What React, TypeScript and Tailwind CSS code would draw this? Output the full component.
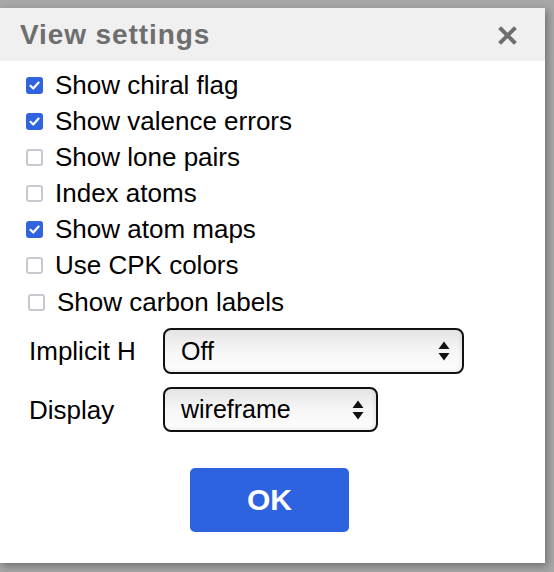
import React from "react";

const font = { fontFamily: '"Liberation Sans", Arial, sans-serif' };

function Check({ checked }: { checked: boolean }) {
  if (checked) {
    return (
      <span className="flex h-[17px] w-[17px] shrink-0 items-center justify-center rounded-[3px] bg-[#2f64de]">
        <svg width="13" height="13" viewBox="0 0 13 13">
          <path d="M2.5 6.8 L5.3 9.5 L10.6 3.6" fill="none" stroke="#fff" strokeWidth="2.2" strokeLinecap="round" strokeLinejoin="round" />
        </svg>
      </span>
    );
  }
  return <span className="block h-[17px] w-[17px] shrink-0 rounded-[3px] border-2 border-[#c6cad0] bg-white" />;
}

function Row({ label, checked, extra = "" }: { label: string; checked: boolean; extra?: string }) {
  return (
    <div className={`flex h-[36px] items-center gap-[12px] ${extra}`}>
      <Check checked={checked} />
      <span className="text-[26px] leading-none text-black">{label}</span>
    </div>
  );
}

function Arrows() {
  return (
    <svg width="14" height="22" viewBox="0 0 14 22" className="shrink-0">
      <path d="M7 1.5 L12.5 9 L1.5 9 Z" fill="#111" />
      <path d="M7 20.5 L12.5 13 L1.5 13 Z" fill="#111" />
    </svg>
  );
}

function Select({ value, width, height }: { value: string; width: string; height: string }) {
  return (
    <div
      className={`flex ${width} ${height} items-center justify-between rounded-[8px] border-2 border-[#111] bg-gradient-to-b from-[#e4e4e4] via-[#f6f6f6] to-[#fdfdfd] pl-[16px] pr-[11px] shadow-[inset_-2px_-2px_3px_rgba(0,0,0,0.06)]`}
    >
      <span className="text-[25px] leading-none text-black">{value}</span>
      <Arrows />
    </div>
  );
}

export default function App() {
  return (
    <div className="h-[572px] w-[554px] overflow-hidden bg-[#a7a7a7] pt-[8px]" style={font}>
      <div className="flex h-[555px] w-[545px] flex-col bg-white shadow-[2px_3px_8px_rgba(0,0,0,0.35)]">
        <div className="flex h-[53px] shrink-0 items-center justify-between bg-[#f0f0f0] pl-[20px] pr-[28px] pt-[1px]">
          <span className="text-[28px] font-bold leading-none tracking-[0.9px] text-[#6e6e6e]">View settings</span>
          <svg width="19" height="19" viewBox="0 0 19 19">
            <path d="M3 3 L16 16 M16 3 L3 16" stroke="#6e6e6e" strokeWidth="4" strokeLinecap="square" />
          </svg>
        </div>
        <div className="flex flex-col pl-[26px] pt-[6px]">
          <Row label="Show chiral flag" checked />
          <Row label="Show valence errors" checked />
          <Row label="Show lone pairs" checked={false} />
          <Row label="Index atoms" checked={false} />
          <Row label="Show atom maps" checked />
          <Row label="Use CPK colors" checked={false} />
          <Row label="Show carbon labels" checked={false} extra="ml-[2px] mt-[1px]" />
        </div>
        <div className="mt-[8px] flex flex-col gap-[13px] pl-[29px]">
          <div className="flex items-center">
            <span className="w-[134px] text-[26px] leading-none text-black">Implicit H</span>
            <Select value="Off" width="w-[301px]" height="h-[46px]" />
          </div>
          <div className="flex items-center">
            <span className="w-[134px] text-[26px] leading-none text-black">Display</span>
            <Select value="wireframe" width="w-[215px]" height="h-[45px]" />
          </div>
        </div>
        <div className="mt-[36px] pl-[190px]">
          <button className="flex h-[64px] w-[159px] items-center justify-center rounded-[5px] bg-[#2d63df] text-[30px] font-bold leading-none text-white">
            OK
          </button>
        </div>
      </div>
    </div>
  );
}
